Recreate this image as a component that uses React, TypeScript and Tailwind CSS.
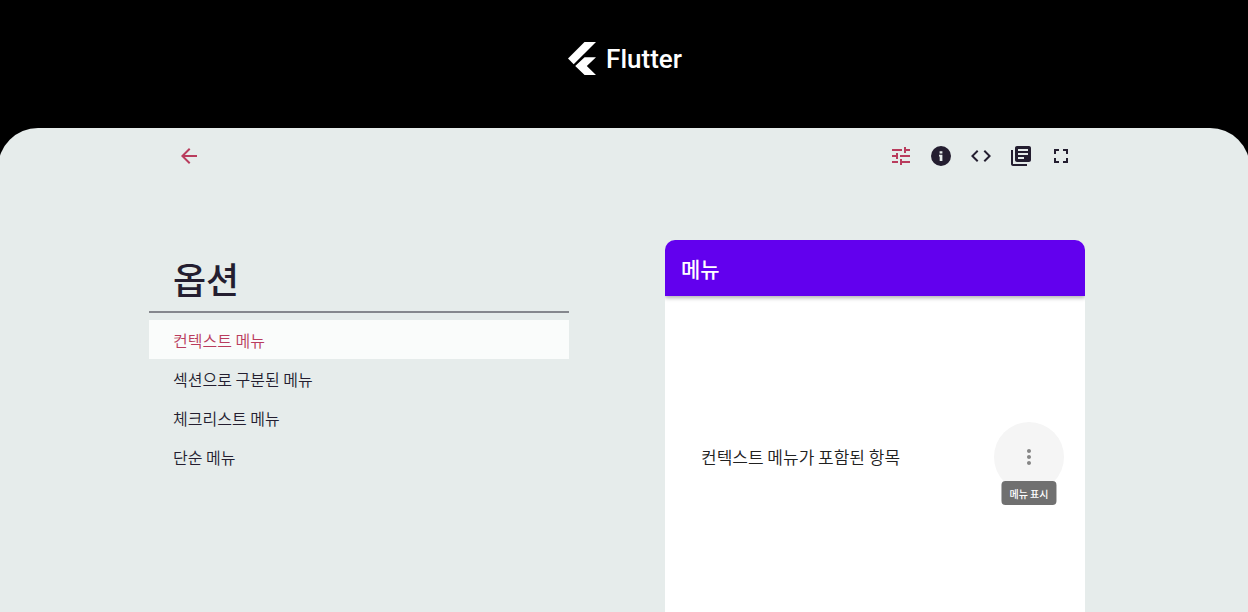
import { useState } from "react";
import {
  MdArrowBack,
  MdCode,
  MdFullscreen,
  MdLibraryBooks,
  MdMoreVert,
  MdTune,
} from "react-icons/md";

function InfoIcon({ size = 24 }: { size?: number }) {
  return (
    <svg viewBox="0 0 24 24" width={size} height={size} fill="currentColor" aria-hidden="true">
      <path
        fillRule="evenodd"
        d="M12 2a10 10 0 1 0 0 20a10 10 0 0 0 0-20ZM10.6 7.2H13.4V9.6H10.6ZM10 10.8H13.4V17H10.7V12.4H10Z"
      />
    </svg>
  );
}

const options = ["컨텍스트 메뉴", "섹션으로 구분된 메뉴", "체크리스트 메뉴", "단순 메뉴"];

const tools = [
  { label: "옵션", Icon: MdTune },
  { label: "정보", Icon: InfoIcon },
  { label: "코드", Icon: MdCode },
  { label: "문서", Icon: MdLibraryBooks },
  { label: "전체 화면", Icon: MdFullscreen },
];

function Brand() {
  return (
    <header className="flex h-32 items-start justify-center pt-[42px] pl-0.5">
      <a href="#" className="flex items-center gap-2.5 text-white">
        <svg viewBox="0 0 28 33" className="h-[33px] w-7" fill="currentColor" aria-hidden="true">
          <path d="M16.5 0H28L5.7 22.2L0 16.5Z" />
          <path d="M16.6 15.2H28L18.8 24.1L28 33H16.6L7.2 24.1Z" />
        </svg>
        <span className="font-['Roboto',sans-serif] text-[26px] leading-8 font-medium">Flutter</span>
      </a>
    </header>
  );
}

function Toolbar({ active, onPick }: { active: number; onPick: (i: number) => void }) {
  return (
    <nav className="flex h-14 items-center justify-between pr-1 pl-5">
      <button type="button" aria-label="뒤로" className="grid size-10 place-items-center text-[#b93c5d]">
        <MdArrowBack size={24} />
      </button>
      <div className="flex">
        {tools.map(({ label, Icon }, i) => (
          <button
            key={label}
            type="button"
            aria-label={label}
            onClick={() => onPick(i)}
            className={`grid size-10 place-items-center ${i === active ? "text-[#b93c5d]" : "text-[#241e30]"}`}
          >
            <Icon size={24} />
          </button>
        ))}
      </div>
    </nav>
  );
}

export default function App() {
  const [tool, setTool] = useState(0);
  const [selected, setSelected] = useState(0);

  return (
    <div className="flex min-h-screen flex-col overflow-x-hidden bg-black font-['Noto_Sans_CJK_KR',sans-serif]">
      <Brand />
      <main className="-mx-0.5 flex grow flex-col rounded-t-[40px] bg-[#e6eceb] pr-3.5">
        <div className="mx-auto flex w-full max-w-[936px] grow flex-col">
          <Toolbar active={tool} onPick={setTool} />
          <div className="grid grow grid-cols-2 gap-24 pt-14">
            <section>
              <h1 className="border-b-2 border-[#85878d] px-6 pt-2.5 pb-1 text-4xl leading-[57px] font-medium text-[#241e30]">
                옵션
              </h1>
              <ul className="pt-[7px]">
                {options.map((name, i) => (
                  <li key={name}>
                    <button
                      type="button"
                      onClick={() => setSelected(i)}
                      className={`block h-[39px] w-full px-6 text-left text-base font-[350] ${
                        i === selected ? "bg-[#fafcfb] text-[#b93c5d]" : "text-[#241e30]"
                      }`}
                    >
                      {name}
                    </button>
                  </li>
                ))}
              </ul>
            </section>

            <section className="flex flex-col overflow-hidden rounded-t-[10px] bg-white">
              <h2 className="h-14 bg-[#6200ee] px-4 text-[21px] leading-[56px] font-medium text-white shadow-[0_2px_4px_rgba(0,0,0,0.3)]">
                메뉴
              </h2>
              <div className="flex items-center justify-between pt-[126px] pr-[21px] pb-[120px] pl-9">
                <p className="text-[17px] leading-6 font-[350] text-[#212121]">컨텍스트 메뉴가 포함된 항목</p>
                <div className="relative">
                  <button
                    type="button"
                    aria-label="메뉴 열기"
                    aria-describedby="menu-tip"
                    className="grid size-[70px] place-items-center rounded-full bg-[#f5f5f5] text-[#868686]"
                  >
                    <MdMoreVert size={24} />
                  </button>
                  <div
                    id="menu-tip"
                    role="tooltip"
                    className="absolute top-[59px] left-1/2 h-6 -translate-x-1/2 rounded bg-[#707070] px-2 text-[10px] leading-[26px] font-medium whitespace-nowrap text-white"
                  >
                    메뉴 표시
                  </div>
                </div>
              </div>
            </section>
          </div>
        </div>
      </main>
    </div>
  );
}
